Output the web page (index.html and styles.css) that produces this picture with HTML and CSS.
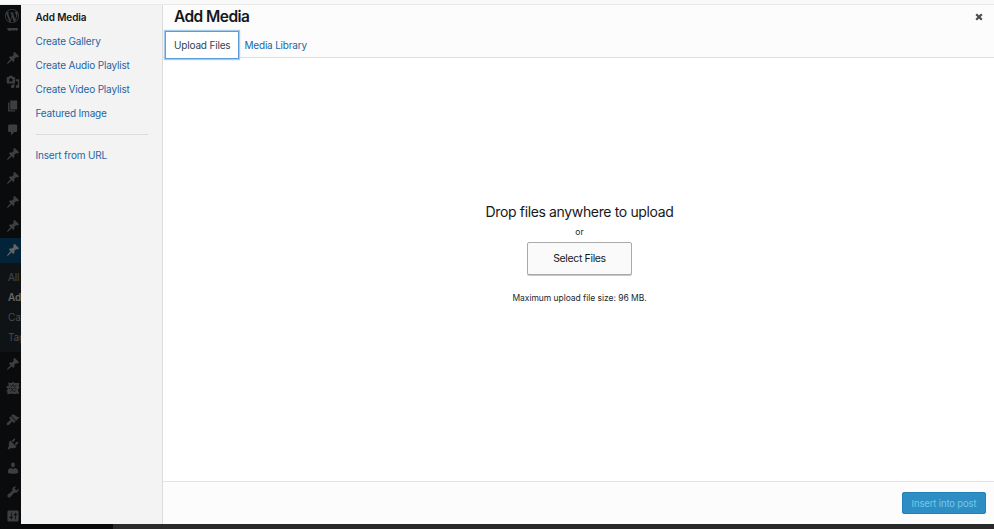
FILE: index.html
```html
<!DOCTYPE html>
<html lang="en">
<head>
<meta charset="utf-8">
<title>Add Media</title>
<link rel="stylesheet" href="styles.css">
</head>
<body>
<svg class="defs" aria-hidden="true">
<symbol id="pin" viewBox="0 0 20 20"><path d="M10.44 3.02l1.82-1.82 6.36 6.35-1.83 1.82c-1.05-.68-2.48-.57-3.41.36l-.75.75c-.92.93-1.04 2.35-.35 3.41l-1.83 1.82-2.41-2.41-2.8 2.79c-.42.42-3.38 2.71-3.8 2.29s1.86-3.39 2.28-3.81l2.79-2.79L4.1 9.36l1.83-1.82c1.05.69 2.48.57 3.4-.36l.75-.75c.93-.92 1.05-2.35.36-3.41z"/></symbol>
</svg>
<div class="topstrip"></div>
<div class="screen">
  <nav class="rail">
    <div class="brand">
      <svg viewBox="0 0 20 20"><path d="M20 10c0-5.51-4.49-10-10-10C4.48 0 0 4.49 0 10c0 5.52 4.48 10 10 10 5.51 0 10-4.48 10-10zM7.78 15.37L4.37 6.22c.55-.02 1.17-.08 1.17-.08.5-.06.44-1.13-.06-1.11 0 0-1.45.11-2.37.11-.18 0-.37 0-.58-.01C4.12 2.69 6.87 1.11 10 1.11c2.33 0 4.45.87 6.05 2.34-.68-.11-1.65.39-1.65 1.58 0 .74.45 1.36.9 2.1.35.61.55 1.36.55 2.46 0 1.49-1.4 5-1.4 5l-3.03-8.37c.54-.02.82-.17.82-.17.5-.05.44-1.25-.06-1.22 0 0-1.44.12-2.38.12-.87 0-2.33-.12-2.33-.12-.5-.03-.56 1.2-.06 1.22l.92.08 1.26 3.41zM17.41 10c.24-.64.74-1.87.43-4.25.7 1.29 1.05 2.71 1.05 4.25 0 3.29-1.73 6.24-4.4 7.78.97-2.59 1.94-5.2 2.92-7.78zM6.1 18.09C3.12 16.65 1.11 13.53 1.11 10c0-1.3.23-2.48.72-3.59C3.25 10.3 4.67 14.2 6.1 18.09zm4.03-6.63l2.58 6.98c-.86.29-1.76.45-2.71.45-.79 0-1.57-.11-2.29-.33.81-2.38 1.62-4.74 2.42-7.1z"/></svg>
      <svg class="dash" viewBox="0 0 11 3"><path d="M0 0h11v1.5L9.5 3 8 2 6.5 3 5 2 3.500 3 1 2.500z"/></svg>
    </div>
    <div class="item"><svg><use href="#pin"/></svg></div>
    <div class="item"><svg viewBox="0 0 20 20"><path d="M13 11V4c0-.55-.45-1-1-1h-1.670L9 1H5L3.670 3H2c-.55 0-1 .45-1 1v7c0 .55.45 1 1 1h10c.55 0 1-.45 1-1zM7 4.500c1.380 0 2.500 1.120 2.500 2.500S8.380 9.500 7 9.500 4.500 8.380 4.500 7 5.620 4.500 7 4.500zM14 6h5v10.500c0 1.380-1.120 2.500-2.500 2.500S14 17.880 14 16.500s1.120-2.500 2.500-2.500c.17 0 .34.02.5.05V9h-3V6zm-4 8.050V13h2v3.500c0 1.380-1.120 2.500-2.500 2.500S7 17.880 7 16.500 8.120 14 9.500 14c.17 0 .34.02.5.05z"/></svg></div>
    <div class="item"><svg viewBox="0 0 20 20"><path d="M6 15V2h10v13H6zm-1 1h8v2H3V5h2v11z"/></svg></div>
    <div class="item"><svg viewBox="0 0 20 20"><path d="M5 2h9c1.100 0 2 .9 2 2v7c0 1.100-.9 2-2 2h-2l-5 5v-5H5c-1.100 0-2-.9-2-2V4c0-1.100.9-2 2-2z"/></svg></div>
    <div class="item"><svg><use href="#pin"/></svg></div>
    <div class="item"><svg><use href="#pin"/></svg></div>
    <div class="item"><svg><use href="#pin"/></svg></div>
    <div class="item"><svg><use href="#pin"/></svg></div>
    <div class="item current"><svg><use href="#pin"/></svg></div>
    <div class="submenu"><span>All</span><b>Add</b><span>Cat</span><span>Tag</span></div>
    <div class="item"><svg><use href="#pin"/></svg></div>
    <div class="item"><svg viewBox="0 0 20 20"><path d="M3 2l5 1 2-2 2 2 7 0-1 5 2 1-3 3 2 7-4-1-3 1-3-1-7 1 0-4-2-1 3-2-3-4 4-1z"/><path class="cut" d="M6 6l2 2 2-3 2 3 3-2M4 11l3-1 2 2 3-2 3 2M6 15l2-2 3 2 3-1"/></svg></div>
    <div class="item gap"><svg viewBox="0 0 20 20"><path d="M14.480 11.060L7.410 3.990l1.500-1.500c.5-.56 2.300-.47 3.510.32 1.210.8 1.430 1.280 2.910 2.100 1.180.64 2.450 1.260 4.450.85zm-.71.71L6.700 4.700 4.930 6.470c-.39.39-.39 1.020 0 1.410l1.060 1.060c.39.39.39 1.030 0 1.420-.6.6-1.430 1.110-2.210 1.690-.35.26-.7.53-1.010.84C1.430 14.230.4 16.080 1.400 17.070c.99 1 2.840-.03 4.180-1.360.31-.31.58-.66.85-1.020.57-.78 1.080-1.610 1.690-2.210.39-.39 1.020-.39 1.410 0l1.060 1.060c.39.39 1.020.39 1.410 0z"/></svg></div>
    <div class="item"><svg viewBox="0 0 20 20"><path d="M13.110 4.360L9.870 7.600 8 5.730l3.240-3.240c.35-.34 1.050-.2 1.560.32.52.51.66 1.210.31 1.550zm-8 1.770l.91-1.120 9.010 9.010-1.190.84c-.71.71-2.630 1.160-3.820 1.160H6.140L4.900 17.260c-.59.59-1.540.59-2.120 0-.59-.58-.59-1.530 0-2.120l1.240-1.240v-3.880c0-1.130.4-3.190 1.090-3.890zm7.260 3.970l3.240-3.240c.34-.35 1.040-.21 1.550.31.52.51.66 1.210.31 1.550l-3.240 3.250z"/></svg></div>
    <div class="item"><svg viewBox="0 0 20 20"><path d="M10 9.250c-2.270 0-2.730-3.440-2.730-3.440C7 4.020 7.820 2 9.970 2c2.160 0 2.980 2.020 2.710 3.810 0 0-.41 3.440-2.680 3.440zm0 2.570L12.720 10c2.390 0 4.520 2.330 4.520 4.530v2.490s-3.650 1.130-7.240 1.130c-3.650 0-7.240-1.130-7.240-1.130v-2.490c0-2.250 1.940-4.480 4.470-4.480z"/></svg></div>
    <div class="item"><svg viewBox="0 0 20 20"><path d="M16.680 9.770c-1.340 1.340-3.300 1.670-4.950.99l-5.410 6.520c-.99.99-2.590.99-3.580 0s-.99-2.590 0-3.570l6.520-5.420c-.68-1.650-.35-3.610.99-4.950 1.280-1.280 3.120-1.620 4.720-1.060l-2.890 2.890 2.820 2.820 2.860-2.870c.53 1.580.18 3.390-1.080 4.650z"/></svg></div>
    <div class="item"><svg viewBox="0 0 20 20"><path d="M18 16V4c0-1.100-.9-2-2-2H4c-1.100 0-2 .9-2 2v12c0 1.100.9 2 2 2h12c1.100 0 2-.9 2-2zM8 11h1c.55 0 1 .45 1 1s-.45 1-1 1H8v1.500c0 .28-.22.5-.5.5s-.5-.22-.5-.5V13H6c-.55 0-1-.45-1-1s.45-1 1-1h1V5.500c0-.28.22-.5.5-.5s.5.22.5.5V11zm5-2h-1c-.55 0-1-.45-1-1s.45-1 1-1h1V5.500c0-.28.22-.5.5-.5s.5.22.5.5V7h1c.55 0 1 .45 1 1s-.45 1-1 1h-1v5.500c0 .28-.22.5-.5.5s-.5-.22-.5-.5V9z"/></svg></div>
  </nav>
  <div class="column">
    <div class="modal">
      <aside class="menu">
        <a class="active">Add Media</a>
        <a>Create Gallery</a>
        <a>Create Audio Playlist</a>
        <a>Create Video Playlist</a>
        <a>Featured Image</a>
        <hr>
        <a>Insert from URL</a>
      </aside>
      <section class="frame">
        <header>
          <div class="titlebar">
            <h1>Add Media</h1>
            <svg class="close" viewBox="0 0 8 8"><path d="M1.200 1.200l5.600 5.600M6.800 1.200L1.200 6.800"/></svg>
          </div>
          <div class="tabs"><a class="tab selected">Upload Files</a><a class="tab">Media Library</a></div>
        </header>
        <main>
          <h2>Drop files anywhere to upload</h2>
          <p class="or">or</p>
          <button class="select">Select Files</button>
          <p class="limit">Maximum upload file size: 96 MB.</p>
        </main>
        <footer><button class="insert">Insert into post</button></footer>
      </section>
    </div>
    <div class="under"></div>
  </div>
</div>
</body>
</html>
```
FILE: styles.css
```css
* { box-sizing: border-box; }
body { margin: 0; width: 994px; height: 529px; overflow: hidden; display: flex; flex-direction: column; background: #fff; font-family: Inter, "Liberation Sans", sans-serif; font-size: 10px; color: #23282d; }
.defs { display: none; }
.topstrip { height: 5px; flex: none; background: #f9f9f9; border-bottom: 1px solid #e9e9e9; }
.screen { flex: 1; min-height: 0; display: flex; }
.rail { width: 21px; flex: none; overflow: hidden; background: #090b0d; display: flex; flex-direction: column; }
.rail svg { display: block; width: 14px; height: 14px; fill: #3c3e40; flex: none; }
.brand { height: 41px; flex: none; padding: 4px 0 0 5px; }
.brand .dash { width: 11px; height: 3px; margin: 5px 0 0 2px; }
.item { height: 24px; flex: none; padding: 5px 0 0 6px; }
.item.current { height: 25px; background: #032438; }
.rail .current svg { fill: #626567; }
.rail .cut { fill: none; stroke: #090b0d; stroke-width: 1; }
.item.gap { margin-top: 8px; }
.submenu { height: 89px; flex: none; background: #101315; padding: 4px 0 0 8px; display: flex; flex-direction: column; line-height: 20px; letter-spacing: -.15px; color: #484b4d; white-space: nowrap; }
.submenu b { color: #66686a; font-weight: 600; }
.column { flex: 1; min-width: 0; display: flex; flex-direction: column; }
.modal { flex: 1; min-height: 0; display: flex; }
.under { height: 5px; flex: none; background: linear-gradient(90deg, #08090a 92px, #29292a 92px); }
.menu { width: 142px; flex: none; background: #f3f3f3; border-right: 1px solid #dcdcdc; padding-left: 14.5px; display: flex; flex-direction: column; }
.menu a { line-height: 24px; color: #1f66a3; letter-spacing: -.17px; white-space: nowrap; }
.menu .active { color: #15181b; font-weight: 600; letter-spacing: -.1px; }
.menu hr { width: 112px; height: 1px; margin: 9px 0 8px; border: 0; background: #dcdcdc; }
.frame { flex: 1; min-width: 0; display: flex; flex-direction: column; }
header { height: 53px; flex: none; background: #fcfcfc; border-bottom: 1px solid #dfdfdf; }
.titlebar { height: 26px; display: flex; justify-content: space-between; padding: 0 11.500px 0 11px; }
h1 { margin: 0; font-size: 15.500px; line-height: 23px; font-weight: 600; letter-spacing: -.55px; color: #15181b; }
.close { width: 8px; height: 8px; margin-top: 7.500px; stroke: #4c4c4c; stroke-width: 2.200; fill: none; }
.tabs { display: flex; padding-left: 2px; }
.tab { height: 28px; line-height: 28px; padding: 0 5.500px; color: #1f66a3; letter-spacing: -.2px; white-space: nowrap; }
.tab.selected { width: 74px; line-height: 26px; border: 1px solid #5b9dd9; box-shadow: 0 0 1px 1px #a5cbed; background: #fff; color: #2f4350; padding: 0 8px; letter-spacing: -.17px; }
main { flex: 1; display: flex; flex-direction: column; align-items: center; padding: 142px 0 0 2px; }
h2 { margin: 0; font-size: 14px; line-height: 24px; font-weight: 400; letter-spacing: -.36px; color: #15181b; }
.or { margin: 0 0 2px; font-size: 8.500px; line-height: 16px; }
button { font-family: inherit; padding: 0; }
.select { width: 105px; height: 33px; border: 1px solid #aaa; border-radius: 2px; background: #fafafa; box-shadow: 0 1px 0 #c8c8c8; color: #15181b; font-size: 10.500px; letter-spacing: -.35px; }
.limit { margin: 15px 0 0; font-size: 8.500px; line-height: 16px; letter-spacing: -.04px; }
footer { height: 43px; flex: none; background: #fcfcfc; border-top: 1px solid #e3e3e3; display: flex; justify-content: flex-end; padding: 10px 8px 0 0; }
.insert { width: 84px; height: 22px; border: 1px solid #2380b8; border-radius: 2px; background: #2e8ec4; color: #73c8e9; font-size: 9.500px; letter-spacing: -.15px; white-space: nowrap; }
```
